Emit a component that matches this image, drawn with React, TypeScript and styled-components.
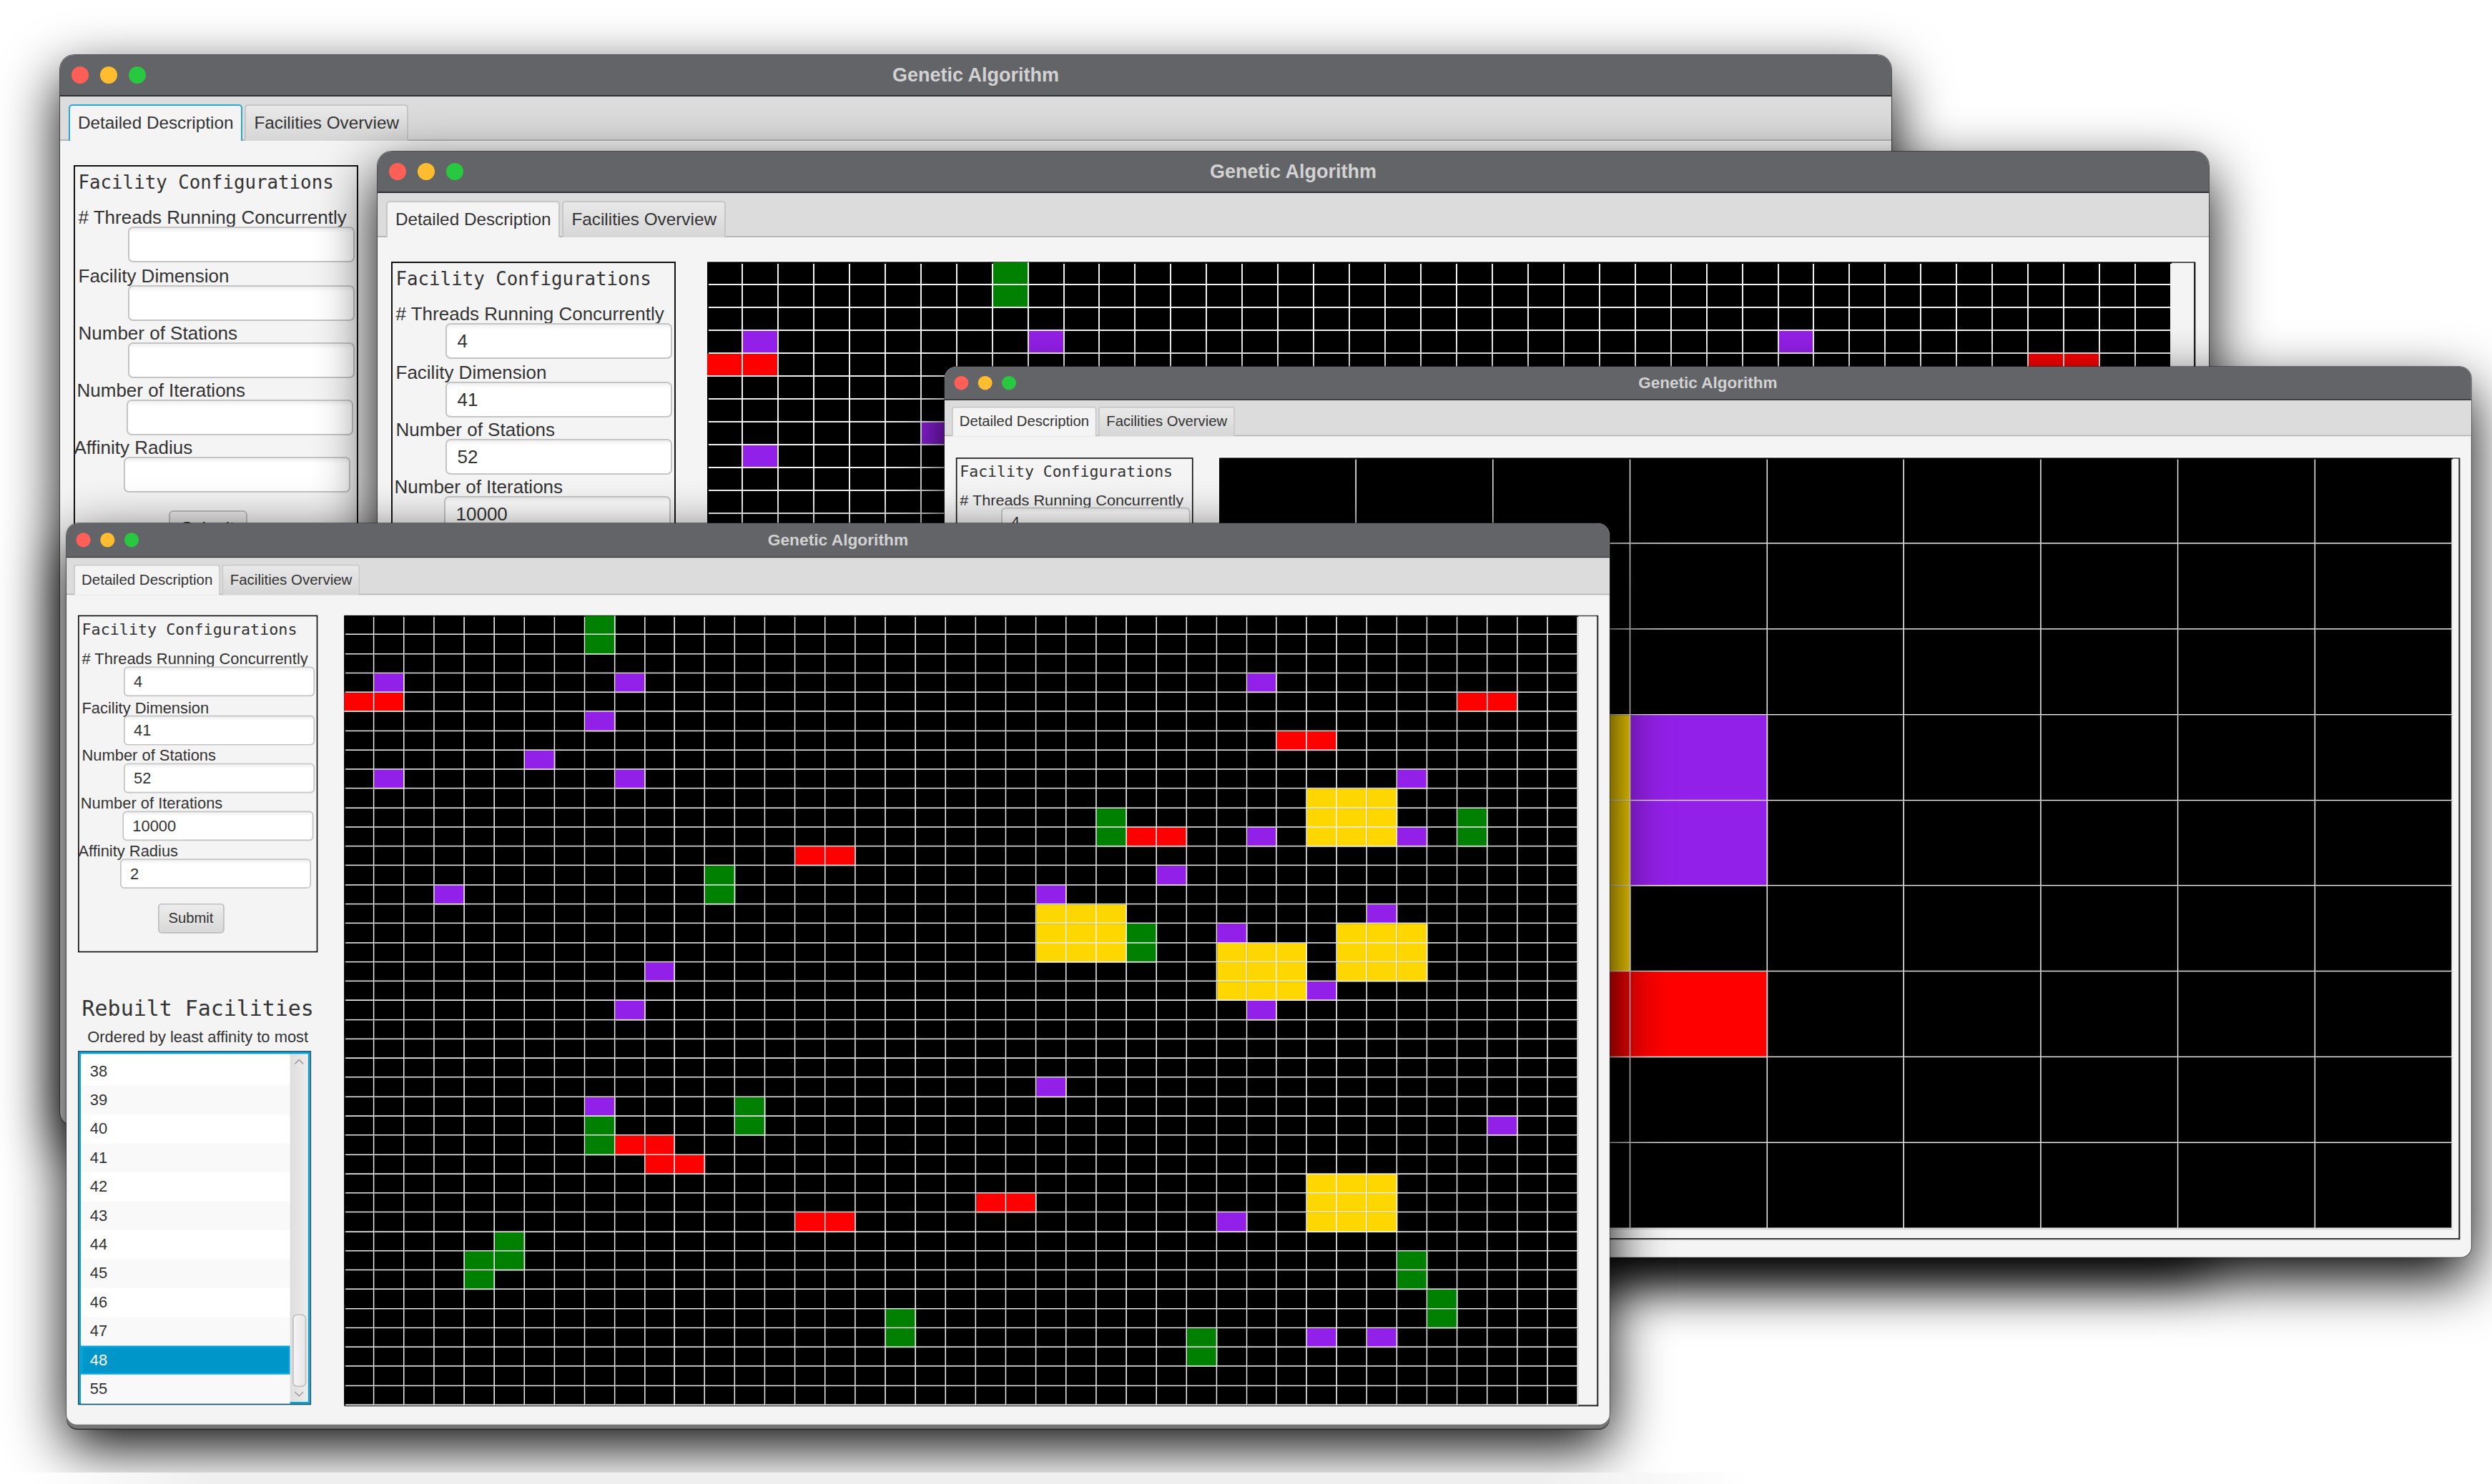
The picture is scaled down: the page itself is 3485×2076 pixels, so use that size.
import React from "react";
import styled, { createGlobalStyle } from "styled-components";
import { ChevronUp, ChevronDown } from "lucide-react";

const Global = createGlobalStyle`
  html, body { margin: 0; padding: 0; background: #fff; overflow: hidden; }
  * { box-sizing: border-box; }
`;

const SANS = `"Liberation Sans", Arial, sans-serif`;
const MONO = `"DejaVu Sans Mono", "Liberation Mono", monospace`;

const Page = styled.div`
  width: 3485px;
  height: 2076px;
  display: flex;
  flex-direction: column;
  font-family: ${SANS};
`;

const Desktop = styled.div`
  position: relative;
  height: 2060px;
  overflow: hidden;
  flex: none;
`;

const BottomFade = styled.div`
  height: 16px;
  background: linear-gradient(to right, #fff 40px, #efefef 300px, #efefef 2150px, #fff 2450px);
`;

const Win = styled.section<{ $x: number; $y: number; $h: number; $sx: number; $sy: number; $stack?: boolean }>`
  position: absolute;
  left: ${(p) => p.$x}px;
  top: ${(p) => p.$y}px;
  width: 2561px;
  height: ${(p) => p.$h}px;
  transform-origin: 0 0;
  transform: scale(${(p) => p.$sx}, ${(p) => p.$sy});
  display: flex;
  flex-direction: column;
  background: #f4f4f4;
  border-radius: 20px 20px 18px 18px;
  box-shadow: ${(p) => (p.$stack ? "0 7px 0 #757575, 0 8.5px 0 #222," : "")} 0 0 0 1px rgba(40, 40, 40, 0.75),
    0 ${(p) => 30 / p.$sy}px ${(p) => 80 / p.$sx}px #000;
`;

const TitleBar = styled.header`
  flex: none;
  height: 58px;
  position: relative;
  display: flex;
  align-items: center;
  justify-content: center;
  background: #636467;
  border-bottom: 2px solid #2f2f31;
  border-radius: 20px 20px 0 0;
`;

const Lights = styled.div`
  position: absolute;
  left: 16px;
  top: 16px;
  display: flex;
  gap: 16px;
`;

const Light = styled.span<{ $c: string }>`
  width: 24px;
  height: 24px;
  border-radius: 50%;
  background: ${(p) => p.$c};
`;

const Title = styled.h1`
  margin: 0;
  font: bold 27px ${SANS};
  color: #d2d2d3;
`;

const TabBar = styled.nav`
  flex: none;
  height: 62px;
  padding: 11px 0 0 12px;
  display: flex;
  gap: 3px;
  background: #dcdcdc;
  border-bottom: 2px solid #b7b7b7;
`;

const Tab = styled.div<{ $active?: boolean; $focus?: boolean }>`
  height: 51px;
  padding: 0 11px 2px;
  display: flex;
  align-items: center;
  font-size: 24.3px;
  color: #333;
  white-space: nowrap;
  border-radius: 5px 5px 0 0;
  border: 2px solid ${(p) => (p.$focus ? "#2aa7d6" : "#c6c6c6")};
  border-bottom: none;
  background: ${(p) => (p.$active ? "#f4f4f4" : "linear-gradient(#e9e9e9, #d6d6d6)")};
  ${(p) => (p.$active ? "margin-bottom: -2px; height: 51px;" : "")}
`;

const Content = styled.main<{ $top: number }>`
  flex: 1;
  min-height: 0;
  display: flex;
  gap: 44px;
  padding: ${(p) => p.$top}px 19px 31px;
`;

const Sidebar = styled.aside`
  flex: none;
  width: 398px;
  display: flex;
  flex-direction: column;
`;

const FormPanel = styled.form`
  flex: none;
  height: 565px;
  border: 2.5px solid #111;
  padding: 7px 0 0 4.5px;
  display: flex;
  flex-direction: column;
`;

const Heading = styled.h2`
  margin: 0 0 21px;
  height: 30px;
  font: 25.8px/30px ${MONO};
  color: #333;
  white-space: nowrap;
`;

const Field = styled.div<{ $gap: number; $shift: number }>`
  margin-top: ${(p) => p.$gap}px;
  margin-left: ${(p) => p.$shift}px;
  display: flex;
  flex-direction: column;
`;

const Label = styled.label`
  font-size: 26px;
  line-height: 26px;
  height: 26px;
  color: #333;
  white-space: nowrap;
`;

const TextInput = styled.div`
  margin-left: 69px;
  width: 317px;
  height: 50px;
  padding-left: 15px;
  display: flex;
  align-items: center;
  font-size: 26px;
  color: #333;
  background: linear-gradient(#efefef 0, #fff 7px);
  border: 2px solid #c4c4c4;
  border-radius: 7px;
`;

const SubmitButton = styled.div`
  margin: 25px 0 0 126px;
  width: 110px;
  height: 50px;
  display: flex;
  align-items: center;
  justify-content: center;
  font-size: 24px;
  color: #333;
  background: linear-gradient(#ededed, #d8d8d8);
  border: 2px solid #bdbdbd;
  border-radius: 6px;
`;

const RebuiltTitle = styled.h2`
  margin: 72px 0 10px;
  font: 35.5px/44px ${MONO};
  text-align: center;
  color: #333;
  white-space: nowrap;
`;

const Subtitle = styled.p`
  margin: 0 0 9px;
  font-size: 26px;
  line-height: 30px;
  text-align: center;
  color: #333;
  white-space: nowrap;
`;

const ListBox = styled.div`
  width: 387px;
  height: 593px;
  flex: none;
  display: flex;
  background: #fff;
  border: 2px solid #0d4a63;
  padding: 3px;
  box-shadow: inset 0 0 0 5px #03a3d8;
`;

const ListRows = styled.ol`
  flex: 1;
  margin: 0;
  padding: 5px 0 0;
  list-style: none;
  display: flex;
  flex-direction: column;
  background: #fff;
`;

const ListRow = styled.li<{ $alt: boolean; $selected?: boolean }>`
  flex: none;
  height: 48.4px;
  padding-left: 15px;
  display: flex;
  align-items: center;
  font-size: 26px;
  color: ${(p) => (p.$selected ? "#fff" : "#333")};
  background: ${(p) => (p.$selected ? "#0096c9" : p.$alt ? "#f9f9f9" : "#fff")};
  ${(p) => (p.$selected ? "box-shadow: inset 0 0 0 3px #00a5dc;" : "")}
`;

const ScrollBar = styled.div`
  flex: none;
  width: 30px;
  position: relative;
  display: flex;
  flex-direction: column;
  justify-content: space-between;
  align-items: center;
  color: #9a9a9a;
  background: linear-gradient(to right, #dedede, #ececec);
`;

const ScrollThumb = styled.div`
  position: absolute;
  left: 4px;
  right: 3px;
  top: 436px;
  height: 122px;
  background: linear-gradient(to right, #f4f4f4, #e8e8e8);
  border: 2px solid #c0c0c0;
  border-radius: 8px;
`;

const CanvasFrame = styled.div`
  flex: 1;
  min-width: 0;
  background: #f4f4f4;
  border: 2px solid #222;
  border-top-color: #555;
  border-left: none;
  box-shadow: 0 -2px 0 #fff, 1px 1px 0 #999;
`;

const Board = styled.div<{ $w: number; $h: number; $n: number }>`
  position: relative;
  margin-top: -1px;
  width: ${(p) => p.$w}px;
  height: ${(p) => p.$h}px;
  display: grid;
  grid-template-columns: repeat(${(p) => p.$n}, 1fr);
  grid-template-rows: repeat(${(p) => p.$n}, 1fr);
  background: #000;

  &::before,
  &::after {
    content: "";
    position: absolute;
    top: 0;
    left: 0;
    background: #000;
  }
  &::before {
    right: 0;
    height: 2px;
  }
  &::after {
    bottom: 0;
    width: 2px;
  }
`;

const COLORS: Record<string, string> = {
  g: "#008000",
  p: "#9320e8",
  r: "#ff0000",
  y: "#ffd700",
  k: "#000",
};

const Cell = styled.div<{ $k: string }>`
  background: ${(p) => COLORS[p.$k]};
  border-right: 2px solid #f0f0f0;
  border-bottom: 2px solid #f0f0f0;
  ${(p) => (p.$k === "k" ? "" : "position: relative; z-index: 1;")}
`;

type Run = [string, number, number[]];

const span = (a: number, b: number) => Array.from({ length: b - a + 1 }, (_, i) => a + i);

const DATA: Run[] = [
  ["g", 0, [8]], ["g", 1, [8]],
  ["p", 3, [1, 9, 30]],
  ["r", 4, [0, 1, 37, 38]],
  ["p", 5, [8]],
  ["r", 6, [31, 32]],
  ["p", 7, [6]],
  ["p", 8, [1, 9, 35]],
  ["y", 9, [32, 33, 34]],
  ["y", 10, [32, 33, 34]], ["g", 10, [25, 37]],
  ["g", 11, [25, 37]], ["r", 11, [26, 27]], ["p", 11, [30, 35]], ["y", 11, [32, 33, 34]],
  ["r", 12, [15, 16]],
  ["g", 13, [12]], ["p", 13, [27]],
  ["p", 14, [3, 23]], ["g", 14, [12]],
  ["y", 15, [23, 24, 25]], ["p", 15, [34]],
  ["y", 16, [23, 24, 25, 33, 34, 35]], ["g", 16, [26]], ["p", 16, [29]],
  ["y", 17, [23, 24, 25, 29, 30, 31, 33, 34, 35]], ["g", 17, [26]],
  ["p", 18, [10]], ["y", 18, [29, 30, 31, 33, 34, 35]],
  ["y", 19, [29, 30, 31]], ["p", 19, [32]],
  ["p", 20, [9, 30]],
  ["p", 24, [23]],
  ["p", 25, [8]], ["g", 25, [13]],
  ["g", 26, [8, 13]], ["p", 26, [38]],
  ["g", 27, [8]], ["r", 27, [9, 10]],
  ["r", 28, [10, 11]],
  ["y", 29, [32, 33, 34]],
  ["r", 30, [21, 22]], ["y", 30, [32, 33, 34]],
  ["r", 31, [15, 16]], ["p", 31, [29]], ["y", 31, [32, 33, 34]],
  ["g", 32, [5]],
  ["g", 33, [4, 5, 35]],
  ["g", 34, [4, 35]],
  ["g", 35, [36]],
  ["g", 36, [18, 36]],
  ["g", 37, [18, 28]], ["p", 37, [32, 34]],
  ["g", 38, [28]],
];

const CLOSE_UP: Run[] = [
  ["y", 3, [1, 2]], ["y", 4, [1, 2]], ["y", 5, [1, 2]],
  ["p", 3, [3]], ["p", 4, [3]],
  ["r", 6, [1, 2, 3]],
];

function Grid({ n, w, h, runs }: { n: number; w: number; h: number; runs: Run[] }) {
  const map = new Map<number, string>();
  runs.forEach(([k, r, cols]) => cols.forEach((c) => map.set(r * n + c, k)));
  return (
    <Board $w={w} $h={h} $n={n}>
      {span(0, n * n - 1).map((i) => (
        <Cell key={i} $k={map.get(i) ?? "k"} />
      ))}
    </Board>
  );
}

const FIELDS = [
  { label: "# Threads Running Concurrently", gap: 0, shift: 0 },
  { label: "Facility Dimension", gap: 6, shift: 0 },
  { label: "Number of Stations", gap: 4, shift: 0 },
  { label: "Number of Iterations", gap: 4, shift: -2 },
  { label: "Affinity Radius", gap: 4, shift: -6 },
];

const ROWS = ["38", "39", "40", "41", "42", "43", "44", "45", "46", "47", "48", "55"];

function AppWindow(props: {
  x: number;
  y: number;
  h: number;
  sx: number;
  sy: number;
  top?: number;
  values: string[];
  focusTab?: boolean;
  stack?: boolean;
  board?: React.ReactNode;
}) {
  return (
    <Win $x={props.x} $y={props.y} $h={props.h} $sx={props.sx} $sy={props.sy} $stack={props.stack}>
      <TitleBar>
        <Lights>
          <Light $c="#ff5f57" />
          <Light $c="#febc2e" />
          <Light $c="#28c840" />
        </Lights>
        <Title>Genetic Algorithm</Title>
      </TitleBar>
      <TabBar>
        <Tab $active $focus={props.focusTab}>Detailed Description</Tab>
        <Tab>Facilities Overview</Tab>
      </TabBar>
      <Content $top={props.top ?? 34}>
        <Sidebar>
          <FormPanel>
            <Heading>Facility Configurations</Heading>
            {FIELDS.map((f, i) => (
              <Field key={f.label} $gap={f.gap} $shift={f.shift}>
                <Label>{f.label}</Label>
                <TextInput>{props.values[i]}</TextInput>
              </Field>
            ))}
            <SubmitButton>Submit</SubmitButton>
          </FormPanel>
          <RebuiltTitle>Rebuilt Facilities</RebuiltTitle>
          <Subtitle>Ordered by least affinity to most</Subtitle>
          <ListBox>
            <ListRows>
              {ROWS.map((r, i) => (
                <ListRow key={r} $alt={i % 2 === 1} $selected={r === "48"}>{r}</ListRow>
              ))}
            </ListRows>
            <ScrollBar>
              <ChevronUp size={26} strokeWidth={1.6} />
              <ScrollThumb />
              <ChevronDown size={26} strokeWidth={1.6} />
            </ScrollBar>
          </ListBox>
        </Sidebar>
        <CanvasFrame>{props.board}</CanvasFrame>
      </Content>
    </Win>
  );
}

const FILLED = ["4", "41", "52", "10000", "2"];

export default function App() {
  return (
    <Page>
      <Global />
      <Desktop>
        <AppWindow x={84} y={77} h={1497} sx={1} sy={1} values={["", "", "", "", ""]} focusTab />
        <AppWindow x={528} y={212} h={1536} sx={1} sy={1} values={FILLED} board={<Grid n={41} w={2048} h={1312} runs={DATA} />} />
        <AppWindow x={1321} y={513} h={1538} sx={0.8336} sy={0.81} top={37} values={FILLED} board={<Grid n={9} w={2069} h={1331} runs={CLOSE_UP} />} />
        <AppWindow x={93} y={732} h={1510} sx={0.8426} sy={0.835} values={FILLED} stack board={<Grid n={41} w={2048} h={1323} runs={DATA} />} />
      </Desktop>
      <BottomFade />
    </Page>
  );
}
